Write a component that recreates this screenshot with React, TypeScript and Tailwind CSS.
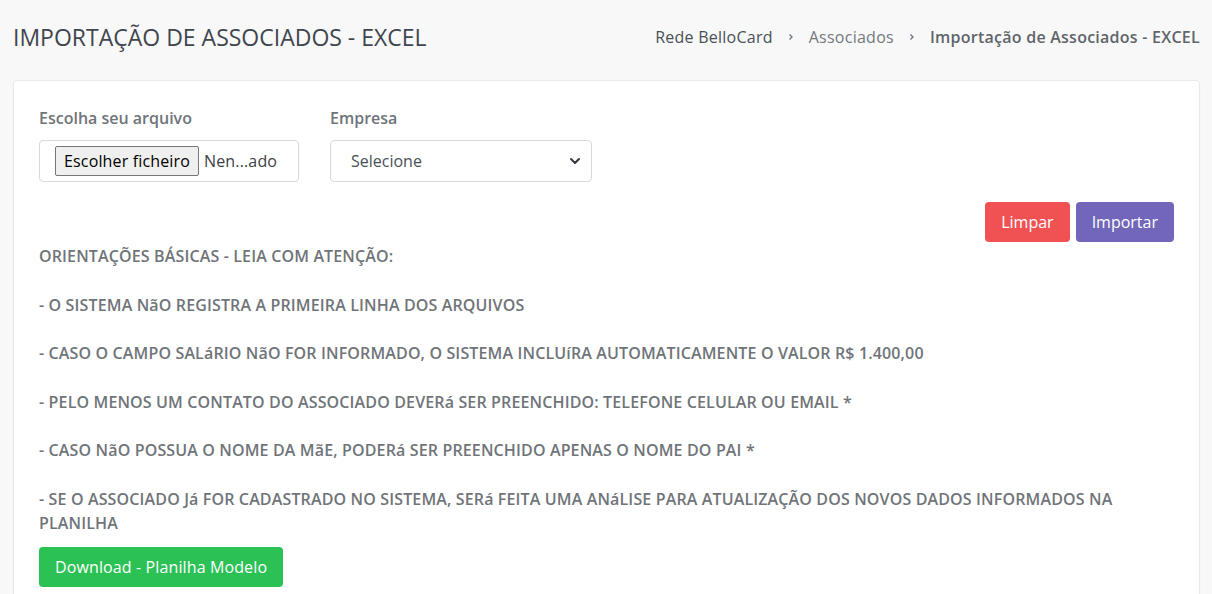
import React from "react";

const lines = [
  "- O SISTEMA NãO REGISTRA A PRIMEIRA LINHA DOS ARQUIVOS",
  "- CASO O CAMPO SALáRIO NãO FOR INFORMADO, O SISTEMA INCLUíRA AUTOMATICAMENTE O VALOR R$ 1.400,00",
  "- PELO MENOS UM CONTATO DO ASSOCIADO DEVERá SER PREENCHIDO: TELEFONE CELULAR OU EMAIL *",
  "- CASO NãO POSSUA O NOME DA MãE, PODERá SER PREENCHIDO APENAS O NOME DO PAI *",
  "- SE O ASSOCIADO Já FOR CADASTRADO NO SISTEMA, SERá FEITA UMA ANáLISE PARA ATUALIZAÇÃO DOS NOVOS DADOS INFORMADOS NA PLANILHA",
];

function Chevron() {
  return (
    <svg width="10" height="10" viewBox="0 0 10 10" className="mx-[13px]">
      <path d="M3.5 2.5 L6 5 L3.5 7.5" fill="none" stroke="#6c757d" strokeWidth="1.3" />
    </svg>
  );
}

export default function App() {
  return (
    <div
      className="min-h-[594px] w-full bg-[#f8f8f8] text-[#6c757d]"
      style={{ fontFamily: '"Open Sans", "Noto Sans", sans-serif' }}
    >
      <div className="flex h-[74px] items-center justify-between pl-[13px] pr-[12px]">
        <h1 className="text-[23px] leading-[30px] text-[#3f464d]">IMPORTAÇÃO DE ASSOCIADOS - EXCEL</h1>
        <div className="flex items-center text-[16px] leading-[24px] tracking-[0.25px]">
          <span className="text-[#495057]">Rede BelloCard</span>
          <Chevron />
          <span className="text-[#74797e]">Associados</span>
          <Chevron />
          <span className="font-semibold text-[#5f656b]">Importação de Associados - EXCEL</span>
        </div>
      </div>
      <div className="ml-[13px] mr-[12px] mt-[6px] rounded-[4px] border border-[#e7e9ec] bg-white px-[25px] pb-[20px] pt-[25px] shadow-[0_1px_2px_rgba(0,0,0,0.03)]">
        <div className="flex gap-[31px]">
          <div className="flex w-[260px] flex-col">
            <label className="mb-[10px] text-[16px] font-semibold leading-[24px] text-[#6f7479]">Escolha seu arquivo</label>
            <div className="flex h-[42px] items-center rounded-[4px] border border-[#d6d9dd] bg-white pl-[15px] tracking-[0.15px]">
              <span className="flex h-[30px] items-center rounded-[2px] border border-[#767676] bg-[#efefef] px-[8px] text-[16px] text-black">
                Escolher ficheiro
              </span>
              <span className="ml-[5px] text-[16px] text-[#3b3f44]">Nen...ado</span>
            </div>
          </div>
          <div className="flex w-[262px] flex-col">
            <label className="mb-[10px] text-[16px] font-semibold leading-[24px] text-[#6f7479]">Empresa</label>
            <div className="flex h-[42px] items-center justify-between rounded-[4px] border border-[#d6d9dd] bg-white pl-[20px] pr-[10px]">
              <span className="text-[16px] text-[#495057]">Selecione</span>
              <svg width="12" height="12" viewBox="0 0 12 12">
                <path d="M2 4 L6 8 L10 4" fill="none" stroke="#343a40" strokeWidth="2" strokeLinecap="round" strokeLinejoin="round" />
              </svg>
            </div>
          </div>
        </div>
        <div className="mt-[20px] flex justify-end gap-[6px]">
          <button className="h-[40px] rounded-[4px] bg-[#f05253] px-[16px] text-[16px] text-white">Limpar</button>
          <button className="h-[40px] rounded-[4px] bg-[#7166b9] px-[16px] text-[16px] text-white">Importar</button>
        </div>
        <div className="mt-[2px] text-[16px] font-semibold leading-[24px] tracking-[0.14px] text-[#6f7479]">
          <p className="mb-[24.6px]">ORIENTAÇÕES BÁSICAS - LEIA COM ATENÇÃO:</p>
          {lines.map((l, i) => (
            <p key={i} className={i < lines.length - 1 ? "mb-[24.6px]" : ""}>
              {l}
            </p>
          ))}
        </div>
        <button className="mt-[12px] h-[40px] rounded-[4px] bg-[#2bc155] px-[16px] text-[16px] tracking-[0.12px] text-white">
          Download - Planilha Modelo
        </button>
      </div>
    </div>
  );
}
